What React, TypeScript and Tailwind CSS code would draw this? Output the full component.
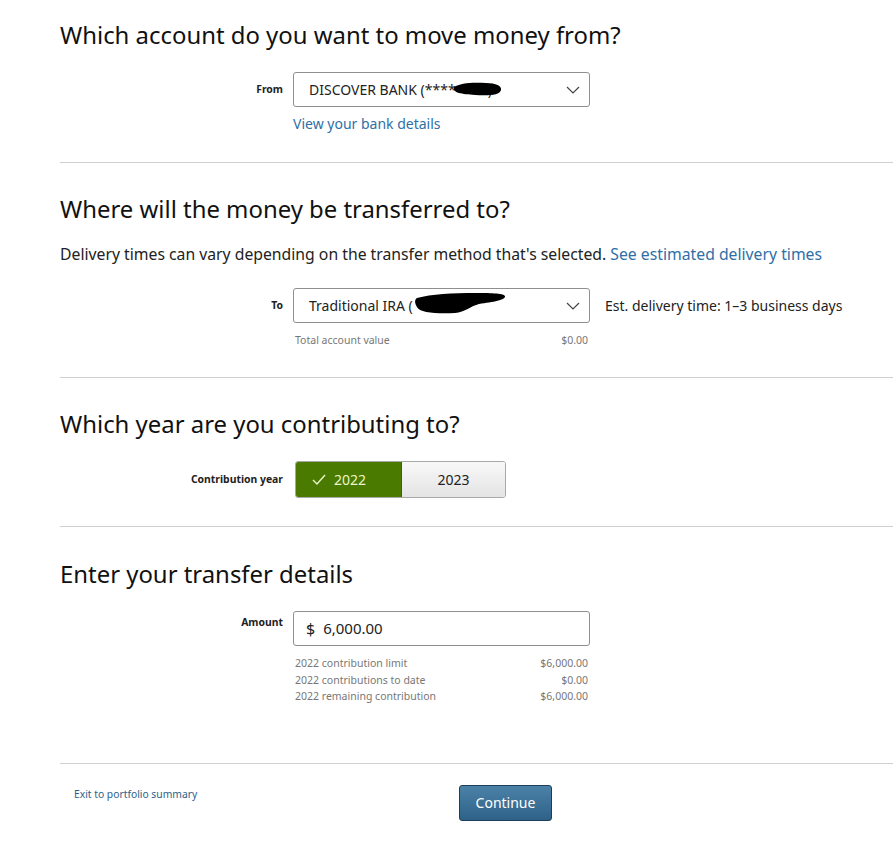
import { ReactNode } from "react";

const font = { fontFamily: '"Noto Sans", "Open Sans", Arial, sans-serif' };

function Chevron() {
  return (
    <svg width="14" height="8" viewBox="0 0 14 8" className="shrink-0">
      <path d="M1 1l6 6 6-6" fill="none" stroke="#444" strokeWidth="1.2" />
    </svg>
  );
}

function Row({ label, children, top }: { label: string; children: ReactNode; top?: boolean }) {
  return (
    <div className={`flex ${top ? "items-start" : "items-center"}`}>
      <div className={`w-[233px] shrink-0 text-right text-[10.4px] font-bold text-[#222] pr-[10px] ${top ? "pt-[4px]" : ""}`}>
        {label}
      </div>
      <div className="flex items-center">{children}</div>
    </div>
  );
}

function Divider() {
  return <div className="h-px bg-[#d0d0d0]" />;
}

export default function App() {
  return (
    <div className="min-h-screen bg-white text-[#111] overflow-hidden" style={font}>
      <div className="pl-[60px]">
        {/* From */}
        <h2 className="pt-[20px] text-[23.9px] leading-[30px] text-[#111]">Which account do you want to move money from?</h2>
        <div className="mt-[22px]">
          <Row label="From">
            <div className="w-[297px] h-[35px] border border-[#8f8f8f] rounded-[3px] flex items-center justify-between pl-[15px] pr-[9px]">
              <span className="relative text-[14px] text-[#222]">
                DISCOVER BANK (****
                <span className="invisible">1234</span>)
                <svg className="absolute left-[143px] top-[2px]" width="52" height="16" viewBox="0 0 52 16">
                  <path d="M2 6C8 2 20 1 34 2c10 0 16 3 15 7-1 5-12 6-26 5C10 13 0 12 2 6z" fill="#000" />
                </svg>
              </span>
              <Chevron />
            </div>
          </Row>
        </div>
        <div className="pl-[233px] mt-[7px] text-[14px] leading-[20px] text-[#2f6fa6]">View your bank details</div>
        <div className="mt-[28px]">
          <Divider />
        </div>

        {/* To */}
        <h2 className="mt-[31px] text-[23.9px] leading-[30px]">Where will the money be transferred to?</h2>
        <p className="mt-[20px] text-[15.75px] leading-[20px] text-[#222]">
          Delivery times can vary depending on the transfer method that's selected.{" "}
          <span className="text-[#2f6fa6]">See estimated delivery times</span>
        </p>
        <div className="mt-[24px]">
          <Row label="To">
            <div className="w-[297px] h-[35px] border border-[#8f8f8f] rounded-[3px] flex items-center justify-between pl-[15px] pr-[9px]">
              <span className="relative text-[14px] text-[#222]">
                Traditional IRA (
                <svg className="absolute left-[104px] top-[-5px]" width="96" height="26" viewBox="0 0 96 26">
                  <path d="M4 8C18 4 40 3 62 3c14 0 28 0 30 3 1 4-12 6-26 8-8 2-14 8-24 9-16 1-36 0-38-6C2 14 1 10 4 8z" fill="#000" />
                </svg>
              </span>
              <Chevron />
            </div>
            <span className="ml-[15px] text-[14px] text-[#222]">Est. delivery time: 1–3 business days</span>
          </Row>
        </div>
        <div className="ml-[235px] w-[293px] mt-[10px] flex justify-between text-[10.5px] leading-[14px] text-[#777]">
          <span>Total account value</span>
          <span>$0.00</span>
        </div>
        <div className="mt-[30px]">
          <Divider />
        </div>

        {/* Year */}
        <h2 className="mt-[31px] text-[23.9px] leading-[30px]">Which year are you contributing to?</h2>
        <div className="mt-[22px]">
          <Row label="Contribution year">
            <div className="ml-[2px] flex w-[211px] h-[37px] rounded-[3px] border border-[#a8a8a8] overflow-hidden">
              <div className="w-[106px] bg-[#4b7a00] border-r border-[#3d6400] flex items-center pl-[16px] gap-[8px] text-[14px] text-[#eaf6c8]">
                <svg width="14" height="11" viewBox="0 0 14 11">
                  <path d="M1 6l4 4 8-9" fill="none" stroke="#eaf6c8" strokeWidth="1.4" />
                </svg>
                2022
              </div>
              <div className="flex-1 bg-gradient-to-b from-[#f8f8f8] to-[#e4e4e4] flex items-center justify-center text-[14px] text-[#222]">
                2023
              </div>
            </div>
          </Row>
        </div>
        <div className="mt-[28px]">
          <Divider />
        </div>

        {/* Amount */}
        <h2 className="mt-[32px] text-[23.9px] leading-[30px]">Enter your transfer details</h2>
        <div className="mt-[22px]">
          <Row label="Amount" top>
            <div className="w-[297px] h-[35px] border border-[#8f8f8f] rounded-[3px] flex items-center pl-[12px] gap-[8px] text-[15px] text-[#222]">
              <span className="text-[16px]">$</span>
              <span>6,000.00</span>
            </div>
          </Row>
        </div>
        <div className="ml-[235px] w-[293px] mt-[9px] text-[10.5px] leading-[16.5px] text-[#777]">
          <div className="flex justify-between">
            <span>2022 contribution limit</span>
            <span>$6,000.00</span>
          </div>
          <div className="flex justify-between">
            <span>2022 contributions to date</span>
            <span>$0.00</span>
          </div>
          <div className="flex justify-between">
            <span>2022 remaining contribution</span>
            <span>$6,000.00</span>
          </div>
        </div>
        <div className="mt-[58px]">
          <Divider />
        </div>

        {/* Footer */}
        <div className="mt-[21px] flex items-start">
          <div className="w-[399px] pl-[14px] pt-[2px] text-[10.3px] leading-[14px] text-[#2b5f8c]">Exit to portfolio summary</div>
          <button className="w-[93px] h-[36px] rounded-[3px] border border-[#1d3e56] bg-gradient-to-b from-[#4c81a8] to-[#2e6288] text-white text-[14px]">
            Continue
          </button>
        </div>
      </div>
    </div>
  );
}
